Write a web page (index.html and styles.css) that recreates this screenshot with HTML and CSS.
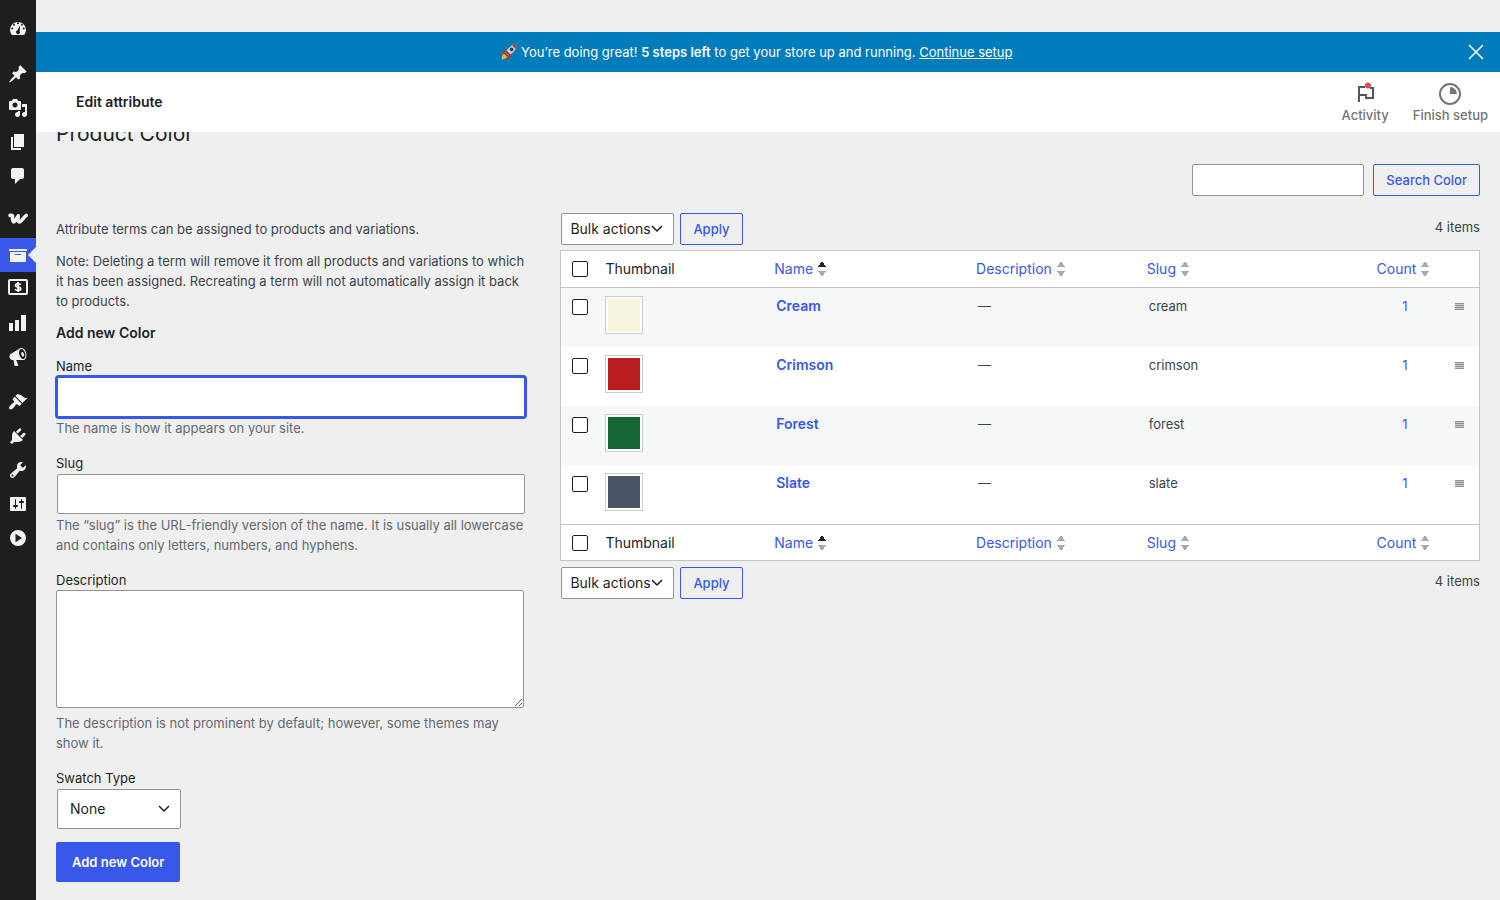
FILE: index.html
```html
<!DOCTYPE html>
<html lang="en-US">
<head>
    <meta charset="UTF-8">
    <meta name="viewport" content="width=device-width, initial-scale=1.0">
    <title>Product Color</title>
    <link rel="stylesheet" href="styles.css">
</head>
<body>
    <nav class="admin-menu" aria-label="Main menu">
        <a href="#" aria-label="Dashboard"><svg viewBox="0 1 20 20"><path fill-rule="evenodd" d="M3.8 17h12.4A8 8 0 1 0 3.8 17zM10 4.2a1 1 0 1 1 0 2 1 1 0 0 1 0-2zM6 5.8a1 1 0 1 1 0 2 1 1 0 0 1 0-2zM4.3 9.5a1 1 0 1 1 0 2 1 1 0 0 1 0-2zM15.7 9.5a1 1 0 1 1 0 2 1 1 0 0 1 0-2zM14 5.8a1 1 0 1 1 0 2 1 1 0 0 1 0-2zM12.2 7.2l-.5 5.9a2 2 0 1 1-2.3-.9z"/></svg></a>
        <hr>
        <a href="#" aria-label="Posts"><svg viewBox="0 0 20 20"><path d="M10.44 3.02l1.82-1.82 6.36 6.35-1.83 1.82c-1.05-.68-2.48-.57-3.41.36l-.75.75c-.92.93-1.04 2.35-.35 3.41l-1.83 1.82-2.41-2.41-2.8 2.79c-.42.42-3.38 2.71-3.8 2.29s1.86-3.39 2.28-3.81l2.79-2.79L4.1 9.36l1.83-1.82c1.05.69 2.48.57 3.4-.36l.75-.75c.93-.92 1.05-2.35.36-3.41z"/></svg></a>
        <a href="#" aria-label="Media"><svg viewBox="0 0 20 20"><path d="M13 11V4c0-.55-.45-1-1-1h-1.67L9 1H5L3.67 3H2c-.55 0-1 .45-1 1v7c0 .55.45 1 1 1h10c.55 0 1-.45 1-1zM7 4.5c1.38 0 2.5 1.12 2.5 2.5S8.38 9.5 7 9.5 4.5 8.38 4.5 7 5.62 4.5 7 4.5zM14 6h5v10.5c0 1.38-1.12 2.5-2.5 2.5S14 17.88 14 16.5s1.12-2.5 2.5-2.5c.17 0 .34.02.5.05V9h-3V6zm-4 8.05V13h2v3.5c0 1.38-1.12 2.5-2.5 2.5S7 17.88 7 16.5 8.12 14 9.5 14c.17 0 .34.02.5.05z"/></svg></a>
        <a href="#" aria-label="Pages"><svg viewBox="0 0 20 20"><path d="M6 15V2h10v13H6zm-1 1h8v2H3V5h2v11z"/></svg></a>
        <a href="#" aria-label="Comments"><svg viewBox="0 0 20 20"><path d="M5 2h9c1.1 0 2 .9 2 2v7c0 1.1-.9 2-2 2h-2l-5 5v-5H5c-1.1 0-2-.9-2-2V4c0-1.1.9-2 2-2z"/></svg></a>
        <hr>
        <a href="#" aria-label="WooCommerce"><svg viewBox="0 1 20 20"><path class="line" stroke-width="3.6" stroke-linecap="round" stroke-linejoin="round" d="M2 5.4h1.5c.7 0 1 .5 1 1.2 0 2.4.1 5.3 1.3 5.3 1.5 0 3-3.6 4.4-6.1-.4 2.6-.3 6.1 1.2 6.1 2.300 0 4-4.800 6.800-6.400"/></svg></a>
        <a href="#" class="current" aria-label="Products"><svg viewBox="0 0 20 20"><path d="M19 4v2H1V4h18zM2 7h16v10H2V7zm11 3V9H7v1h6z"/></svg></a>
        <a href="#" aria-label="Payments"><svg viewBox="0 2 20 20"><rect class="line" x="1" y="3" width="18" height="14" rx="1" stroke-width="2"/><path class="line" stroke-width="1.8" d="M12.7 7.8c-.4-.8-1.3-1.2-2.7-1.2-1.5 0-2.5.6-2.5 1.6 0 2.5 5.2 1.1 5.2 3.5 0 1.1-1.1 1.7-2.7 1.7s-2.5-.5-2.9-1.4M10 5v10"/></svg></a>
        <a href="#" aria-label="Analytics"><svg viewBox="0 0 20 20"><path d="M13 2h5v16h-5zM7 7h4v11H7zM1 10h4v8H1z"/></svg></a>
        <a href="#" aria-label="Marketing"><svg viewBox="0 0 20 20"><path fill-rule="evenodd" d="M18.15 5.94c.46 1.62.38 3.22-.02 4.48-.42 1.28-1.26 2.18-2.3 2.48-.16.06-.26.06-.4.06-.06.02-.12.02-.18.02-.06.02-.14.02-.22.02h-6.8l2.22 5.5c.02.14-.06.26-.14.34-.08.1-.24.16-.34.16H6.95c-.1 0-.26-.06-.34-.16-.08-.08-.16-.2-.14-.34l-1-5.5H4.25l-.02-.02c-.5.06-1.08-.18-1.54-.62s-.88-1.08-1.06-1.88c-.24-.8-.2-1.56-.02-2.2.18-.62.58-1.08 1.06-1.3l.02-.02 9-5.4c.1-.06.18-.1.24-.16.06-.04.14-.08.24-.12.16-.08.28-.12.5-.18 1.04-.3 2.24.1 3.22.98s1.84 2.24 2.26 3.86zm-2.58 5.98c.4-.1.74-.34 1.04-.7.58-.7.86-1.76.86-3.04 0-.64-.1-1.3-.28-1.98-.34-1.36-1.02-2.5-1.78-3.24s-1.68-1.1-2.46-.88c-.82.22-1.4.96-1.7 2-.32 1.04-.28 2.36.06 3.72.38 1.36 1 2.5 1.8 3.24.78.74 1.62 1.1 2.46.88z"/><ellipse cx="14.7" cy="7.3" rx="1.3" ry="2.4" transform="rotate(-15 14.7 7.3)"/></svg></a>
        <hr>
        <a href="#" aria-label="Appearance"><svg viewBox="0 0 20 20"><path d="M14.48 11.06L7.41 3.99l1.5-1.5c.5-.56 2.3-.47 3.51.32 1.21.8 1.43 1.28 2.91 2.1 1.18.64 2.45 1.26 4.45.85zm-.71.71L6.7 4.7 4.93 6.47c-.39.39-.39 1.02 0 1.41l1.06 1.06c.39.39.39 1.03 0 1.42-.6.6-1.43 1.11-2.21 1.69-.35.26-.7.53-1.01.84C1.43 14.23.4 16.08 1.4 17.07c.99 1 2.84-.03 4.18-1.36.31-.31.58-.66.85-1.02.57-.78 1.08-1.61 1.69-2.21.39-.39 1.02-.39 1.41 0l1.06 1.06c.39.39 1.02.39 1.41 0z"/></svg></a>
        <a href="#" aria-label="Plugins"><svg viewBox="0 0 20 20"><path d="M13.11 4.36L9.87 7.6 8 5.73l3.24-3.24c.35-.34 1.05-.2 1.56.32.52.51.66 1.21.31 1.55zm-8 1.77l.91-1.12 9.01 9.01-1.19.84c-.71.71-2.63 1.16-3.82 1.16H6.14L4.9 17.26c-.59.59-1.54.59-2.12 0-.59-.58-.59-1.53 0-2.12l1.24-1.24v-3.88c0-1.13.4-3.19 1.09-3.89zm7.26 3.97l3.24-3.24c.34-.35 1.04-.21 1.55.31.52.51.66 1.21.31 1.55l-3.24 3.25z"/></svg></a>
        <a href="#" aria-label="Tools"><svg viewBox="0 0 20 20"><path d="M16.68 9.77c-1.34 1.34-3.3 1.67-4.95.99l-5.41 6.52c-.99.99-2.59.99-3.58 0s-.99-2.59 0-3.57l6.52-5.42c-.68-1.65-.35-3.61.99-4.95 1.28-1.28 3.12-1.62 4.72-1.06l-2.89 2.89 2.82 2.82 2.86-2.87c.53 1.58.18 3.39-1.08 4.65zM3.81 16.21c.4.39 1.04.39 1.43 0 .4-.4.4-1.04 0-1.43-.39-.4-1.03-.4-1.43 0-.39.39-.39 1.03 0 1.43z"/></svg></a>
        <a href="#" aria-label="Settings"><svg viewBox="0 0 20 20"><path d="M18 16V4c0-.55-.45-1-1-1H3c-.55 0-1 .45-1 1v12c0 .55.45 1 1 1h14c.55 0 1-.45 1-1zM8 11h1c.55 0 1 .45 1 1s-.45 1-1 1H8v1.5c0 .28-.22.5-.5.5s-.5-.22-.5-.5V13H6c-.55 0-1-.45-1-1s.45-1 1-1h1V5.5c0-.28.22-.5.5-.5s.5.22.5.5V11zm5-2h-1c-.55 0-1-.45-1-1s.45-1 1-1h1V5.5c0-.28.22-.5.5-.5s.5.22.5.5V7h1c.55 0 1 .45 1 1s-.45 1-1 1h-1v5.5c0 .28-.22.5-.5.5s-.5-.22-.5-.5V9z"/></svg></a>
        <a href="#" aria-label="Expand menu"><svg viewBox="0 0 20 20"><path fill-rule="evenodd" d="M10 2a8 8 0 1 1 0 16 8 8 0 0 1 0-16zM7.5 5.8v8.4L14 10z"/></svg></a>
    </nav>

    <div class="page">
        <div class="banner">
            <p>
                <svg class="rocket" viewBox="0 0 16 16" aria-hidden="true">
                    <path fill="#f7b32b" d="M4 9.5C1.8 9.8.9 12 .5 15.5 4 15.2 6.2 14 6.5 12z"/>
                    <path fill="#c8322b" d="M6 5.5L2.5 6.6.8 9.8l4-.3zM10.5 10l-1.1 3.5-3.2 1.7.3-4z"/>
                    <path fill="#c9ced2" d="M15.5.5C11 .6 7.5 3 4.5 8.5l3 3C13 8.5 15.4 5 15.5.5z"/>
                    <path fill="#c8322b" d="M15.5.5c-1.6 0-3 .3-4.3 1L14.5 4.8c.7-1.3 1-2.7 1-4.3zM4.5 8.5l-1 1.8 2.2 2.2 1.8-1z"/>
                    <path fill="#3d4852" d="M4.8 8L8 11.2l1.4-.8-3.7-3.7z"/>
                    <circle cx="10.6" cy="5.4" r="1.8" fill="#2b3942"/>
                </svg>
                You’re doing great! <strong>5 steps left</strong> to get your store up and running. <a href="#">Continue setup</a>
            </p>
            <button type="button" class="banner-close" aria-label="Dismiss"><svg viewBox="0 0 16 16"><path d="M1 1l14 14M15 1L1 15"/></svg></button>
        </div>

        <header class="page-header">
            <h1>Edit attribute</h1>
            <div class="tabs">
                <button type="button">
                    <svg viewBox="0 0 24 24"><path d="M6 20V5h6M6 13h7v3h7V6h-3" fill="none" stroke="#50575e" stroke-width="2"/><circle cx="15" cy="3.5" r="3" fill="#d94f4f"/></svg>
                    Activity
                </button>
                <button type="button">
                    <svg viewBox="0 0 24 24"><circle cx="12" cy="12" r="10" fill="none" stroke="#757575" stroke-width="2"/><path d="M12 5v7h7a7 7 0 0 0-7-7z" fill="#757575"/></svg>
                    Finish setup
                </button>
            </div>
        </header>

        <main class="content">
            <h2 class="title">Product Color</h2>

            <form class="search">
                <input type="search" aria-label="Search Color">
                <button type="button" class="button">Search Color</button>
            </form>

            <div class="columns">
                <section class="col-left">
                    <p>Attribute terms can be assigned to products and variations.</p>
                    <p>Note: Deleting a term will remove it from all products and variations to which it has been assigned. Recreating a term will not automatically assign it back to products.</p>
                    <h2>Add new Color</h2>
                    <form>
                        <div class="field">
                            <label for="tag-name">Name</label>
                            <input id="tag-name" class="focused" type="text">
                            <p>The name is how it appears on your site.</p>
                        </div>
                        <div class="field">
                            <label for="tag-slug">Slug</label>
                            <input id="tag-slug" type="text">
                            <p>The “slug” is the URL-friendly version of the name. It is usually all lowercase and contains only letters, numbers, and hyphens.</p>
                        </div>
                        <div class="field">
                            <label for="tag-description">Description</label>
                            <textarea id="tag-description" rows="5"></textarea>
                            <p>The description is not prominent by default; however, some themes may show it.</p>
                        </div>
                        <div class="field">
                            <label for="swatch-type">Swatch Type</label>
                            <select id="swatch-type"><option>None</option></select>
                        </div>
                        <button type="button" class="button-primary">Add new Color</button>
                    </form>
                </section>

                <section class="col-right">
                    <div class="tablenav">
                        <select aria-label="Select bulk action"><option>Bulk actions</option></select>
                        <button type="button" class="button">Apply</button>
                        <span>4 items</span>
                    </div>

                    <table class="terms">
                        <thead>
                            <tr>
                                <th class="check"><input type="checkbox" aria-label="Select all"></th>
                                <th class="thumb">Thumbnail</th>
                                <th class="name"><a href="#" class="sorted">Name</a></th>
                                <th class="description"><a href="#">Description</a></th>
                                <th class="slug"><a href="#">Slug</a></th>
                                <th class="count"><a href="#">Count</a></th>
                                <th class="handle"></th>
                            </tr>
                        </thead>
                        <tbody>
                            <tr>
                                <td class="check"><input type="checkbox" aria-label="Select Cream"></td>
                                <td class="thumb"><span class="swatch cream"></span></td>
                                <td class="name"><a href="#">Cream</a></td>
                                <td>—</td>
                                <td>cream</td>
                                <td class="count"><a href="#">1</a></td>
                                <td class="handle"><i></i></td>
                            </tr>
                            <tr>
                                <td class="check"><input type="checkbox" aria-label="Select Crimson"></td>
                                <td class="thumb"><span class="swatch crimson"></span></td>
                                <td class="name"><a href="#">Crimson</a></td>
                                <td>—</td>
                                <td>crimson</td>
                                <td class="count"><a href="#">1</a></td>
                                <td class="handle"><i></i></td>
                            </tr>
                            <tr>
                                <td class="check"><input type="checkbox" aria-label="Select Forest"></td>
                                <td class="thumb"><span class="swatch forest"></span></td>
                                <td class="name"><a href="#">Forest</a></td>
                                <td>—</td>
                                <td>forest</td>
                                <td class="count"><a href="#">1</a></td>
                                <td class="handle"><i></i></td>
                            </tr>
                            <tr>
                                <td class="check"><input type="checkbox" aria-label="Select Slate"></td>
                                <td class="thumb"><span class="swatch slate"></span></td>
                                <td class="name"><a href="#">Slate</a></td>
                                <td>—</td>
                                <td>slate</td>
                                <td class="count"><a href="#">1</a></td>
                                <td class="handle"><i></i></td>
                            </tr>
                        </tbody>
                        <tfoot>
                            <tr>
                                <th class="check"><input type="checkbox" aria-label="Select all"></th>
                                <th class="thumb">Thumbnail</th>
                                <th><a href="#" class="sorted">Name</a></th>
                                <th><a href="#">Description</a></th>
                                <th><a href="#">Slug</a></th>
                                <th class="count"><a href="#">Count</a></th>
                                <th></th>
                            </tr>
                        </tfoot>
                    </table>

                    <div class="tablenav">
                        <select aria-label="Select bulk action"><option>Bulk actions</option></select>
                        <button type="button" class="button">Apply</button>
                        <span>4 items</span>
                    </div>
                </section>
            </div>
        </main>
    </div>
</body>
</html>
```

FILE: styles.css
```css
* {
    box-sizing: border-box;
}
body {
    margin: 0;
    display: flex;
    min-height: 100vh;
    background: #efefef;
    color: #3c434a;
    font: 13px/20px Inter, sans-serif;
}
a {
    color: #3858e9;
    text-decoration: none;
}
h1, h2, p {
    margin: 0;
}
input, select, textarea, button {
    font: inherit;
    margin: 0;
}
button {
    cursor: pointer;
}

/* side menu */
.admin-menu {
    width: 36px;
    flex: none;
    padding-top: 12px;
    background: #1e1e1e;
}
.admin-menu a {
    position: relative;
    display: flex;
    align-items: center;
    justify-content: center;
    height: 34px;
    padding-right: 1px;
}
.admin-menu svg {
    width: 20px;
    height: 20px;
    fill: #f3f1f1;
    overflow: visible;
}
.admin-menu .line {
    fill: none;
    stroke: #f3f1f1;
}
.admin-menu hr {
    height: 11px;
    margin: 0;
    border: none;
}
.admin-menu .current {
    background: #3858e9;
}
.admin-menu .current::after {
    content: "";
    position: absolute;
    right: 0;
    top: 9px;
    border: 8px solid transparent;
    border-left: none;
    border-right-color: #efefef;
}

/* banner and header */
.page {
    flex: 1;
    min-width: 0;
    padding-top: 32px;
}
.banner {
    display: flex;
    align-items: center;
    height: 40px;
    padding: 0 16px 0 10px;
    background: #007cba;
    color: #fff;
}
.banner p {
    flex: 1;
    text-align: center;
}
.banner a {
    color: #fff;
    text-decoration: underline;
}
.banner strong {
    font-weight: 600;
}
.rocket {
    width: 16px;
    height: 16px;
    vertical-align: -3px;
}
.banner-close {
    display: flex;
    padding: 0;
    border: none;
    background: none;
}
.banner-close svg {
    width: 16px;
    height: 16px;
    stroke: #fff;
    stroke-width: 1.5;
}
.page-header {
    position: relative;
    z-index: 1;
    display: flex;
    align-items: center;
    justify-content: space-between;
    height: 60px;
    padding-left: 40px;
    background: #fff;
}
.page-header h1 {
    color: #1e1e1e;
    font-size: 14px;
    font-weight: 600;
}
.tabs {
    display: flex;
    padding-top: 2px;
}
.tabs button {
    display: flex;
    flex-direction: column;
    align-items: center;
    padding: 0 12px;
    border: none;
    background: none;
    color: #757575;
    font-weight: 500;
    line-height: 18px;
}
.tabs svg {
    width: 24px;
    height: 24px;
}

/* content */
.content {
    padding: 0 20px;
}
.title {
    margin-top: -13px;
    color: #1d2327;
    font-size: 21px;
    font-weight: 400;
    line-height: 30px;
}
input, textarea, select {
    border: 1px solid #949494;
    border-radius: 2px;
    background: #fff;
    color: #1e1e1e;
}
.search {
    display: flex;
    justify-content: flex-end;
    gap: 9px;
    margin-top: 15px;
}
.search input {
    width: 172px;
    height: 32px;
}
.button {
    height: 32px;
    padding: 0 12px;
    border: 1px solid #3858e9;
    border-radius: 2px;
    background: none;
    color: #3858e9;
    font-weight: 500;
}
.columns {
    display: flex;
    margin-top: 17px;
}
.col-left {
    width: 35%;
    padding: 6px 6px 0 0;
}
.col-left > p {
    margin-bottom: 12px;
    padding-right: 24px;
}
.col-left h2 {
    margin-bottom: 13px;
    color: #1d2327;
    font-size: 14px;
    font-weight: 600;
}
.col-right {
    width: 65%;
    padding-left: 6px;
}

/* add form */
.field {
    width: 95%;
    margin-bottom: 15px;
}
.field label {
    display: block;
    color: #1e1e1e;
}
.field input {
    display: block;
    width: 100%;
    height: 40px;
    margin: 1px;
    padding: 0 12px;
}
.field .focused {
    border-color: #3858e9;
    box-shadow: 0 0 0 2px #3858e9;
}
.field textarea {
    display: block;
    width: 100%;
    height: 118px;
    margin-bottom: 5px;
    padding: 8px;
}
.field p {
    color: #646970;
}
select {
    appearance: none;
    font-size: 14px;
    background: #fff url("data:image/svg+xml,%3Csvg xmlns='http://www.w3.org/2000/svg' width='12' height='8'%3E%3Cpath d='M1 1l5 5 5-5' fill='none' stroke='%231e1e1e' stroke-width='1.5'/%3E%3C/svg%3E") no-repeat right 10px center;
}
.field select {
    display: block;
    width: 124px;
    height: 40px;
    margin: 1px;
    padding: 0 12px;
}
.button-primary {
    height: 40px;
    margin-top: -2px;
    padding: 0 16px;
    border: none;
    border-radius: 2px;
    background: #3858e9;
    color: #fff;
    font-weight: 600;
}

/* terms list */
.tablenav {
    display: flex;
    gap: 6px;
    margin-bottom: 5px;
}
.tablenav select {
    width: 113px;
    height: 32px;
    margin-left: 1px;
    padding: 0 0 0 8px;
}
.tablenav span {
    margin: 4px 0 0 auto;
}
.terms + .tablenav {
    margin-top: 6px;
}
.terms {
    width: 100%;
    table-layout: fixed;
    border: 1px solid #c3c4c7;
    border-spacing: 0;
    background: #fff;
}
.terms th {
    height: 37px;
    padding: 0 8px;
    color: #1d2327;
    font-size: 14px;
    font-weight: 400;
    text-align: left;
}
.terms thead th {
    border-bottom: 1px solid #c3c4c7;
}
.terms tfoot th {
    height: 36px;
    border-top: 1px solid #c3c4c7;
}
.terms td {
    height: 59px;
    padding: 8px 10px;
    vertical-align: top;
}
.terms tbody tr:nth-child(odd) {
    background: #f6f7f7;
}
.terms .check {
    width: 36px;
    padding-left: 11px;
    padding-right: 0;
}
.terms .thumb {
    width: 18.4%;
    padding-left: 8px;
}
.terms .name {
    width: 22%;
}
.terms .description {
    width: 18.6%;
}
.terms .count {
    width: 76px;
    padding-left: 0;
    padding-right: 0;
    text-align: center;
}
.terms td.count {
    padding-left: 4px;
}
.terms .handle {
    width: 38px;
}
.terms td.name a {
    font-size: 14px;
    font-weight: 600;
}
.terms input {
    appearance: none;
    display: block;
    width: 16px;
    height: 16px;
    border-color: #1e1e1e;
}
.terms td.check {
    padding-top: 11px;
}
.terms th a {
    display: inline-flex;
    align-items: center;
    gap: 5px;
}
.terms th a::after {
    content: "";
    width: 8px;
    height: 16px;
    background:
        conic-gradient(from 146deg at 50% 0, #a7aaad 68deg, transparent 0) top / 8px 6px no-repeat,
        conic-gradient(from -34deg at 50% 100%, #a7aaad 68deg, transparent 0) bottom / 8px 6px no-repeat;
}
.terms th a.sorted::after {
    background:
        conic-gradient(from 146deg at 50% 0, #1d2327 68deg, transparent 0) top / 8px 6px no-repeat,
        conic-gradient(from -34deg at 50% 100%, #a7aaad 68deg, transparent 0) bottom / 8px 6px no-repeat;
}
.swatch {
    display: block;
    width: 38px;
    height: 38px;
    padding: 2px;
    border: 1px solid #ccc;
    background-color: #fff;
    background-clip: content-box;
    box-shadow: inset 0 0 0 2px #fff;
}
.cream {
    background-color: #f5f5dc;
}
.crimson {
    background-color: #b91c1c;
}
.forest {
    background-color: #166534;
}
.slate {
    background-color: #4a5568;
}
.handle i {
    display: block;
    width: 9px;
    height: 7px;
    margin: 7px auto 0;
    background: repeating-linear-gradient(#8c8f94 0 1px, #c9cbce 1px 2px);
}
```
